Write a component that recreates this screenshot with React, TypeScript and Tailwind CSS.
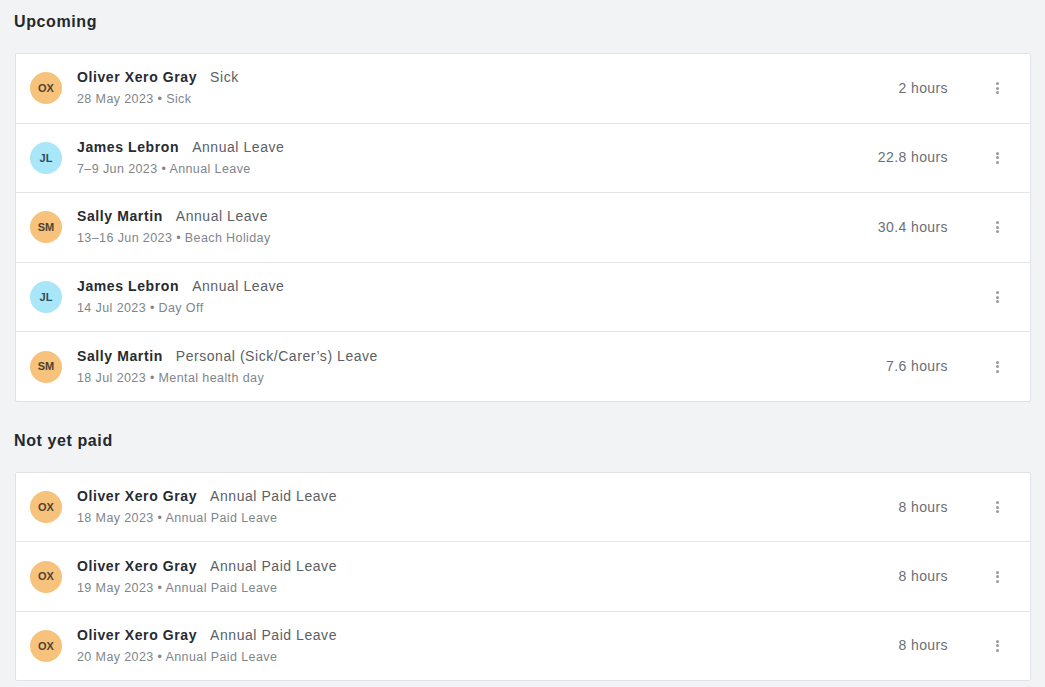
import { Fragment } from 'react';

interface LeaveItem {
  initials: string;
  tone: 'orange' | 'blue';
  name: string;
  type: string;
  detail: string;
  hours?: string;
}

const upcoming: LeaveItem[] = [
  { initials: 'OX', tone: 'orange', name: 'Oliver Xero Gray', type: 'Sick', detail: '28 May 2023 • Sick', hours: '2 hours' },
  { initials: 'JL', tone: 'blue', name: 'James Lebron', type: 'Annual Leave', detail: '7–9 Jun 2023 • Annual Leave', hours: '22.8 hours' },
  { initials: 'SM', tone: 'orange', name: 'Sally Martin', type: 'Annual Leave', detail: '13–16 Jun 2023 • Beach Holiday', hours: '30.4 hours' },
  { initials: 'JL', tone: 'blue', name: 'James Lebron', type: 'Annual Leave', detail: '14 Jul 2023 • Day Off' },
  { initials: 'SM', tone: 'orange', name: 'Sally Martin', type: 'Personal (Sick/Carer’s) Leave', detail: '18 Jul 2023 • Mental health day', hours: '7.6 hours' },
];

const notYetPaid: LeaveItem[] = [
  { initials: 'OX', tone: 'orange', name: 'Oliver Xero Gray', type: 'Annual Paid Leave', detail: '18 May 2023 • Annual Paid Leave', hours: '8 hours' },
  { initials: 'OX', tone: 'orange', name: 'Oliver Xero Gray', type: 'Annual Paid Leave', detail: '19 May 2023 • Annual Paid Leave', hours: '8 hours' },
  { initials: 'OX', tone: 'orange', name: 'Oliver Xero Gray', type: 'Annual Paid Leave', detail: '20 May 2023 • Annual Paid Leave', hours: '8 hours' },
];

function Kebab() {
  return (
    <button className="flex h-8 w-8 flex-col items-center justify-center gap-[1.5px] rounded-full">
      <span className="h-[3px] w-[3px] rounded-full bg-[#979ba1]" />
      <span className="h-[3px] w-[3px] rounded-full bg-[#979ba1]" />
      <span className="h-[3px] w-[3px] rounded-full bg-[#979ba1]" />
    </button>
  );
}

function LeaveRow({ item, height }: { item: LeaveItem; height: string }) {
  return (
    <div className={`flex items-center pl-[14px] pr-[17px] ${height}`}>
      <div
        className={
          item.tone === 'orange'
            ? 'flex h-8 w-8 shrink-0 items-center justify-center rounded-full bg-[#f6c27c] text-[11px] font-bold text-[#4f4230]'
            : 'flex h-8 w-8 shrink-0 items-center justify-center rounded-full bg-[#a9e6f7] text-[11px] font-bold text-[#2c4d5c]'
        }
      >
        {item.initials}
      </div>
      <div className="ml-[15px] flex flex-1 flex-col justify-center">
        <div className="text-[14px] leading-[16px]">
          <span className="font-bold tracking-[0.6px] text-[#262b31]">{item.name}</span>
          <span className="ml-[13px] tracking-[0.55px] text-[#5b6066]">{item.type}</span>
        </div>
        <div className="mt-[6px] text-[12.5px] leading-[16px] tracking-[0.4px] text-[#80858b]">{item.detail}</div>
      </div>
      <div className="mr-[33px] text-[14px] tracking-[0.4px] text-[#6a6f75]">{item.hours}</div>
      <Kebab />
    </div>
  );
}

function Section({ title, items, rowHeight, first }: { title: string; items: LeaveItem[]; rowHeight: string; first?: boolean }) {
  return (
    <section>
      <h2 className={`${first ? 'pt-[12px]' : 'pt-[29px]'} pl-[14px] text-[16px] font-bold leading-[20px] tracking-[0.6px] text-[#24292e]`}>{title}</h2>
      <div className="mx-[14px] ml-[15px] mt-[21px] rounded-[2px] border border-[#dfe2e6] bg-white">
        {items.map((item, i) => (
          <Fragment key={i}>
            {i > 0 && <div className="h-px bg-[#e3e5e8]" />}
            <LeaveRow item={item} height={rowHeight} />
          </Fragment>
        ))}
      </div>
    </section>
  );
}

export default function App() {
  return (
    <div className="min-h-[687px] bg-[#f2f3f5] font-['Liberation_Sans',Arial,sans-serif]">
      <Section title="Upcoming" items={upcoming} rowHeight="h-[68.6px]" first />
      <Section title="Not yet paid" items={notYetPaid} rowHeight="h-[68.4px]" />
    </div>
  );
}
